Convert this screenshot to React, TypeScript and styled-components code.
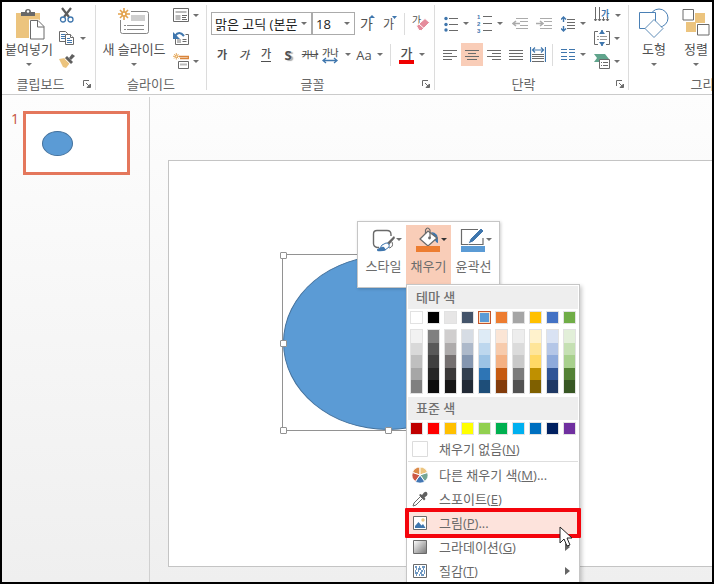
import React from "react";
import styled, { createGlobalStyle, css } from "styled-components";

const GlobalStyle = createGlobalStyle`
  *, *::before, *::after { box-sizing: border-box; }
  body {
    margin: 0;
    font-family: "Open Sans", "Noto Sans CJK KR", sans-serif;
    font-size: 13px;
    color: #5a5a5a;
  }
  button, select { font: inherit; color: inherit; }
  svg { display: block; flex: none; }
`;

const ink = "#6a6a6a";
const blue = "#3f76ad";
const sand = "#ecc47e";

/* ---------- layout ---------- */

const Window = styled.div`
  position: relative;
  display: flex;
  flex-direction: column;
  min-width: 0;
  height: 100vh;
  border: 2px solid #000;
  overflow: hidden;
  background: #fff;
`;

const Ribbon = styled.header`
  display: flex;
  flex: none;
  padding: 3px 0 4px;
  border-bottom: 1px solid #cbcbcb;
  overflow: hidden;
`;

const Group = styled.section<{ $wide?: boolean }>`
  display: flex;
  flex-direction: column;
  flex: none;
  min-width: ${(p) => (p.$wide ? "160px" : "0")};
  border-right: 1px solid #dcdcdc;
`;

const GroupBody = styled.div<{ $pad?: number }>`
  display: flex;
  height: 73px;
  padding-left: ${(p) => p.$pad ?? 0}px;
`;

const GroupFooter = styled.div`
  display: flex;
  align-items: center;
  height: 12px;
`;

const GroupName = styled.span`
  flex: 1;
  text-align: center;
  line-height: 12px;
  color: #666;
`;

const Plain = styled.button`
  display: flex;
  align-items: center;
  padding: 0;
  border: 0;
  background: transparent;
  white-space: nowrap;
`;

const Launcher = styled(Plain)`
  justify-content: center;
  width: 16px;
  height: 12px;
`;

const BigButton = styled(Plain)<{ $w: number }>`
  flex: none;
  flex-direction: column;
  width: ${(p) => p.$w}px;
  height: 66px;
  padding-top: 3px;
  line-height: 18px;
  color: #505050;
  svg:last-child { margin-top: 5px; }
`;

const SmallColumn = styled.div<{ $w: number }>`
  display: flex;
  flex-direction: column;
  gap: 3px;
  width: ${(p) => p.$w}px;
`;

const SmallButton = styled(Plain)`
  gap: 4px;
  height: 20px;
  padding-left: 3px;
`;

const Rows = styled.div`
  display: flex;
  flex-direction: column;
  gap: 8px;
  padding-top: 7px;
`;

const Row = styled.div`
  display: flex;
  align-items: center;
  height: 23px;
`;

const Tool = styled(Plain)<{ $w: number; $on?: boolean }>`
  justify-content: center;
  gap: 5px;
  width: ${(p) => p.$w}px;
  height: 23px;
  background: ${(p) => (p.$on ? "#f9cdb8" : "transparent")};
`;

const Divider = styled.span`
  width: 1px;
  height: 22px;
  margin: 0 2px 0 3px;
  background: #dcdcdc;
`;

const Combo = styled.span<{ $w: number }>`
  display: flex;
  align-items: center;
  width: ${(p) => p.$w}px;
  height: 23px;
  padding-right: 4px;
  border: 1px solid #ababab;
  select {
    flex: 1;
    min-width: 0;
    height: 21px;
    padding: 0 0 0 3px;
    border: 0;
    background: transparent;
    appearance: none;
    color: #222;
    line-height: 20px;
    overflow: hidden;
  }
`;

const Glyph = styled.span<{ $kind?: "bold" | "italic" | "under" | "shadow" | "strike" | "color"; $size?: number }>`
  font-size: ${(p) => p.$size ?? 13}px;
  line-height: 14px;
  font-weight: 500;
  color: #505050;
  ${(p) => p.$kind === "bold" && css`font-weight: 700;`}
  ${(p) => p.$kind === "italic" && css`font-style: italic;`}
  ${(p) => p.$kind === "under" && css`border-bottom: 1px solid #505050;`}
  ${(p) => p.$kind === "shadow" && css`font-weight: 700; text-shadow: 2px 1px 1px #aaa;`}
  ${(p) => p.$kind === "strike" && css`text-decoration: line-through;`}
  ${(p) => p.$kind === "color" && css`border-bottom: 4px solid #f00000; padding: 0 2px;`}
`;

const Workspace = styled.main`
  display: flex;
  flex: 1;
  min-height: 0;
  padding-top: 2px;
  background: linear-gradient(#fdfdfd, #efefef);
`;

const Thumbnails = styled.nav`
  display: flex;
  align-items: flex-start;
  flex: none;
  gap: 4px;
  width: 148px;
  padding: 14px 19px 0 9px;
  border-right: 1px solid #d0d0d0;
`;

const SlideNumber = styled.span`
  width: 8px;
  font-size: 14px;
  line-height: 16px;
  color: #c5503a;
`;

const Thumb = styled.button`
  display: block;
  flex: 1;
  height: 64px;
  padding: 14px 16px;
  border: 3px solid #e4775c;
  background: #fff;
`;

const Stage = styled.div`
  display: flex;
  flex: 1;
  min-width: 0;
  padding: 63px 0 15px 18px;
`;

const Slide = styled.div`
  position: relative;
  flex: 1;
  border: 1px solid #c4c4c4;
  border-right: 0;
  background: #fff;
`;

const Selection = styled.div`
  position: absolute;
  left: 113px;
  top: 93px;
  width: 212px;
  height: 177px;
  border: 1px solid #929292;
`;

const Ellipse = styled.div`
  height: 100%;
  border: 1px solid #44719c;
  border-radius: 50%;
  background: #5b9bd5;
`;

const ThumbEllipse = styled(Ellipse)`
  width: 31px;
  height: 25px;
`;

const Handle = styled.span<{ $x: number; $y: number }>`
  position: absolute;
  left: ${(p) => p.$x}%;
  top: ${(p) => p.$y}%;
  width: 7px;
  height: 7px;
  margin: -3px 0 0 -3px;
  border: 1px solid #929292;
  border-radius: 1px;
  background: #fff;
`;

/* ---------- floating parts ---------- */

const MiniBar = styled.div`
  position: absolute;
  left: 355px;
  top: 219px;
  display: flex;
  height: 67px;
  padding: 3px 3px 0;
  border: 1px solid #c6c6c6;
  background: #fff;
  box-shadow: 1px 1px 3px rgba(0, 0, 0, 0.2);
`;

const MiniButton = styled(Plain)<{ $on?: boolean }>`
  flex-direction: column;
  gap: 4px;
  width: 45px;
  height: 62px;
  padding-top: 2px;
  line-height: 18px;
  color: #6c6c6c;
  background: ${(p) => (p.$on ? "#f9cdb8" : "transparent")};
`;

const Menu = styled.div`
  position: absolute;
  left: 404px;
  top: 282px;
  width: 174px;
  padding: 1px;
  border: 1px solid #c6c6c6;
  background: #fff;
  box-shadow: 2px 2px 4px rgba(0, 0, 0, 0.2);
`;

const MenuHeading = styled.h2`
  height: 23px;
  margin: 0;
  padding-left: 8px;
  font-size: 13px;
  font-weight: 500;
  line-height: 22px;
  color: #707070;
  background: #eee;
`;

const SwatchRow = styled.div<{ $gap?: number }>`
  display: grid;
  grid-template-columns: repeat(10, 13px);
  justify-content: space-between;
  padding: 2px 2px ${(p) => p.$gap ?? 2}px;
`;

const TintGrid = styled(SwatchRow)`
  padding: 0 2px 3px;
`;

const TintColumn = styled.div`
  display: flex;
  flex-direction: column;
  height: 65px;
  border: 1px solid #e2e2e2;
`;

const Tint = styled.button<{ $c: string }>`
  flex: 1;
  padding: 0;
  border: 0;
  background: ${(p) => p.$c};
`;

const Swatch = styled.button<{ $c: string; $on?: boolean }>`
  height: 13px;
  padding: 0;
  border: 1px solid ${(p) => (p.$on ? "#c4562a" : "#e2e2e2")};
  background: ${(p) => p.$c};
  box-shadow: ${(p) => (p.$on ? "inset 0 0 0 1px #fbe0c8" : "none")};
`;

const Item = styled.button<{ $on?: boolean }>`
  position: relative;
  display: flex;
  align-items: center;
  gap: 11px;
  width: 100%;
  height: 24px;
  padding: 0 8px 0 4px;
  border: 0;
  text-align: left;
  line-height: 20px;
  color: #686868;
  background: ${(p) => (p.$on ? "#fde3dc" : "transparent")};
`;

const ItemText = styled.span`
  flex: 1;
  white-space: nowrap;
`;

const Rule = styled.hr`
  height: 1px;
  margin: 0 0 1px;
  border: 0;
  background: #dedede;
`;

const Callout = styled.span`
  position: absolute;
  inset: -3px;
  z-index: 1;
  border: 4px solid #f4040c;
  border-radius: 1px;
`;

const Cursor = styled.svg`
  position: absolute;
  left: 557px;
  top: 524px;
  z-index: 2;
`;

/* ---------- icons ---------- */

const Caret = () => (
  <svg width="6" height="3" viewBox="0 0 6 3"><path d="M0 0h6L3 3z" fill="#707070" /></svg>
);

const LaunchIcon = () => (
  <svg width="8" height="8" viewBox="0 0 8 8" fill="none" stroke={ink}>
    <path d="M.5 6V.5H6M3 3l4 4" /><path d="M7.500 4v3.500H4z" fill={ink} />
  </svg>
);

const PasteIcon = () => (
  <svg width="32" height="32" viewBox="-2 0 32 32">
    <path d="M1 5h24v25H1z" fill={sand} />
    <path d="M6 4h4q0-3 3-3t3 3h4v4H6z" fill="#686868" />
    <circle cx="13" cy="3.500" r="1.200" fill="#fff" />
    <path d="M14 11.500h10l6 6V32H14z" fill="#fff" />
    <path d="M15.500 12.500h7.500l6 6V31H15.500z" fill="#fff" stroke={ink} />
    <path d="M22.500 12.500v6.500H29" fill="none" stroke={ink} />
  </svg>
);

const CutIcon = () => (
  <svg width="16" height="16" viewBox="0 0 16 16" fill="none">
    <path d="M3 1l7 9M12 1L5 10" stroke="#5c5c5c" strokeWidth="2.200" />
    <circle cx="4" cy="12.500" r="2.500" stroke={blue} strokeWidth="1.300" />
    <circle cx="11.500" cy="12.500" r="2.500" stroke={blue} strokeWidth="1.300" />
  </svg>
);

const CopyIcon = () => (
  <svg width="17" height="16" viewBox="0 0 17 16" fill="#fff" stroke={ink}>
    <path d="M.5 1.500h6l2 2v8h-8z" /><path d="M2 4.500h4M2 6.500h4M2 8.500h4" stroke={blue} />
    <path d="M6.500 4.500h5l3 3v7h-8z" /><path d="M11.500 4.500v3h3" /><path d="M8 8.500h3M8 10.500h5M8 12.500h5" stroke={blue} />
  </svg>
);

const BrushIcon = () => (
  <svg width="17" height="16" viewBox="0 0 17 16">
    <path d="M0 6l6-1 5 5-4 5-3-1-1-2z" fill={sand} />
    <path d="M6 5l2-2 6 6-2 2z" fill="#5f5f5f" />
    <path d="M10 5l3-4 3 2-4 4z" fill="#5f5f5f" />
    <path d="M5.500 5.500l6 6" stroke="#fff" strokeWidth=".8" />
  </svg>
);

const Spark = () => (
  <g stroke="#e3a24d" strokeWidth="1.600"><path d="M6 0v12M0 6h12M2 2l8 8M10 2l-8 8" /><circle cx="6" cy="6" r="2" fill="#fff" /></g>
);

const NewSlideIcon = () => (
  <svg width="32" height="32" viewBox="0 0 32 32">
    <rect x="2.500" y="3.500" width="28" height="22" rx="2" fill="#fff" stroke="#858585" />
    <path d="M13 7h14v6H13z" fill="#cfcfcf" />
    <path d="M6 17.500h2M9 17.500h17M6 21.500h2M9 21.500h17" stroke="#8a8a8a" />
    <path d="M0 0h13v12H0z" fill="#fff" /><Spark />
  </svg>
);

const LayoutIcon = () => (
  <svg width="16" height="15" viewBox="0 0 16 15"><path d="M.5.500h15v13H.500z" fill="#fff" stroke={ink} /><path d="M2.500 3h11v2h-11zM2.500 7h5v5h-5z" fill="#bbb" /><path d="M9 7.500h5M9 9.500h4M9 11.500h5" stroke={ink} /></svg>
);

const ResetIcon = () => (
  <svg width="16" height="15" viewBox="0 0 16 15"><path d="M2.500 3.500h13v10h-13z" fill="#fff" stroke={ink} /><path d="M4 8h4v4H4z" fill="#bbb" /><path d="M9.500 8.500h4M9.500 10.500h4" stroke={ink} /><path d="M2 6q3-6 8-3l1 2" fill="none" stroke="#fff" strokeWidth="4" /><path d="M2 5q4-6 9 0" fill="none" stroke={blue} strokeWidth="2" /><path d="M0 1v7h7z" fill={blue} /></svg>
);

const SectionIcon = () => (
  <svg width="16" height="16" viewBox="0 0 16 16"><path d="M6 3.500h9.500v2H7" fill="none" stroke="#d9853b" strokeWidth="1.500" /><path d="M5.500 8.500h10v7h-10z" fill="#fff" stroke={ink} /><path d="M7 11.500h7" stroke="#bbb" strokeWidth="2" /><g transform="scale(.55)"><Spark /></g></svg>
);

const SizeIcon = ({ up }: { up?: boolean }) => (
  <svg width="17" height="23" viewBox="0 0 17 23"><text x="1" y="17" fontSize={up ? 14 : 12} fill="#505050">가</text><path d={up ? "M10 6h6l-3-3z" : "M10 4h5l-2.500 3z"} fill={blue} /></svg>
);

const EraserIcon = () => (
  <svg width="18" height="23" viewBox="0 0 18 23"><text x="0" y="12" fontSize="10" fill="#505050">가</text><path d="M4.500 14L13 6.500l4.500 4-8 8H7z" fill="#e58c9c" stroke="#fff" /><path d="M7 12l5 4.500" stroke="#fff" /></svg>
);

const SpacingIcon = () => (
  <svg width="18" height="20" viewBox="0 0 18 20"><text x="0" y="11" fontSize="9" fontWeight="500" fill="#505050">가나</text><path d="M2 15.500h12M4 13l-3 2.500L4 18M12 13l3 2.500-3 2.500" fill="none" stroke={blue} strokeWidth="1.300" /></svg>
);

const BulletsIcon = () => (
  <svg width="14" height="16" viewBox="0 0 14 16"><path d="M5 2.500h9M5 8.500h9M5 14.500h9" stroke={ink} /><g fill={blue}><circle cx="2" cy="2.500" r="1.700" /><circle cx="2" cy="8.500" r="1.700" /><circle cx="2" cy="14" r="1.700" /></g></svg>
);

const NumbersIcon = () => (
  <svg width="15" height="21" viewBox="0 0 15 21"><path d="M6 3.500h9M6 10.500h9M6 17.500h9" stroke={ink} /><g fill={blue} fontFamily="Liberation Sans, sans-serif" fontSize="6" fontWeight="700"><text x="0" y="6">1</text><text x="0" y="13">2</text><text x="0" y="20">3</text></g></svg>
);

const IndentIcon = ({ right }: { right?: boolean }) => (
  <svg width="16" height="11" viewBox="0 0 16 11" fill="none" stroke="#ababab"><path d="M4 .500h12M8 3.500h8M8 7.500h8M4 10.500h12" /><path d={right ? "M0 5.500h7M4 3l3 2.500L4 8" : "M1 5.500h7M4 3L1 5.500 4 8"} strokeWidth="1.600" /></svg>
);

const LineSpaceIcon = () => (
  <svg width="14" height="16" viewBox="0 0 14 16" fill="none"><path d="M6 3.500h8M6 6.500h8M6 9.500h8M6 12.500h8" stroke={ink} /><path d="M2.500 1v5M2.500 10v5M0 3.500L2.500 1 5 3.500M0 12.500L2.500 15 5 12.500" stroke={blue} strokeWidth="1.400" /></svg>
);

const alignPaths = {
  left: "M0 .500h14M0 3.500h9M0 6.500h14M0 9.500h9",
  center: "M0 .500h14M3 3.500h8M0 6.500h14M2 9.500h10",
  right: "M0 .500h14M5 3.500h9M0 6.500h14M5 9.500h9",
  justify: "M0 .500h14M0 3.500h14M0 6.500h14M0 9.500h14",
};
const AlignIcon = ({ kind }: { kind: keyof typeof alignPaths }) => (
  <svg width="14" height="10" viewBox="0 0 14 10"><path d={alignPaths[kind]} stroke={ink} /></svg>
);

const DistributeIcon = () => (
  <svg width="16" height="16" viewBox="0 0 16 16" fill="none"><path d="M.5 0v15M15.500 0v15M3 3h10M5 .500L2.500 3 5 5.500M11 .500L13.500 3 11 5.500" stroke={blue} strokeWidth="1.200" /><path d="M2 7.500h12M2 9.500h12M2 11.500h12M2 14.500h12" stroke={ink} /></svg>
);

const ColumnsIcon = () => (
  <svg width="14" height="11" viewBox="0 0 14 11"><path d="M0 .500h6M8 .500h6M0 3.500h6M8 3.500h6M0 7.500h6M8 7.500h6M0 10.500h6M8 10.500h6" stroke={blue} /></svg>
);

const DirectionIcon = () => (
  <svg width="17" height="18" viewBox="0 0 17 18" fill="none"><path d="M1.500 1v14M5.500 1v14M9.500 11v4M13.500 11v4M0 13l1.500 2L3 13M4 13l1.500 2L7 13M8 13l1.500 2 1.500-2M12 13l1.500 2 1.500-2" stroke={ink} /><text x="7" y="11" fontSize="9" fontWeight="700" fill={blue}>가</text></svg>
);

const AlignTextIcon = () => (
  <svg width="16" height="16" viewBox="0 0 16 16" fill="none"><path d="M4 1.500H.500v13H4M12 1.500h3.500v13H12" stroke={ink} /><path d="M3 6.500h2M6 6.500h7M3 9.500h2M6 9.500h7" stroke="#999" /><path d="M8 0v4M8 12v4" stroke={blue} strokeWidth="1.500" /><path d="M5 4l3-4 3 4zM5 12l3 4 3-4z" fill={blue} /></svg>
);

const SmartArtIcon = () => (
  <svg width="16" height="17" viewBox="0 0 16 17"><path d="M0 1h11l4 5-4 3H0l3-4z" fill="#60a48c" /><path d="M5.500 6.500h10v9h-10z" fill="#fff" stroke={ink} /><path d="M7 9.500h1M9 9.500h5M7 12.500h1M9 12.500h5" stroke={ink} /></svg>
);

const ShapesIcon = () => (
  <svg width="32" height="32" viewBox="0 0 32 32" fill="#fff" stroke="#4a80b5"><circle cx="21" cy="10" r="9" /><path d="M1.500 4.500h16v16h-16z" /><path d="M16 11.500l9 9-9 9-9-9z" stroke="#5f8db8" /></svg>
);

const ArrangeIcon = () => (
  <svg width="28" height="32" viewBox="0 0 28 32"><path d="M13 5h10v10H13zM4 14h10v10H4z" fill={sand} /><path d="M1 1.500h10.500V12H1zM15.500 16.500H27V27H15.500z" fill="#fff" stroke={ink} /></svg>
);

const MiniCaret = ({ dark }: { dark?: boolean }) => <path d="M30 11h6l-3 3z" fill={dark ? "#333" : "#707070"} />;

const StyleIcon = () => (
  <svg width="36" height="26" viewBox="0 0 36 26" fill="none"><path d="M13 20.500h-2q-3.500-1-3.500-4V7q0-3.500 3.500-3.500h10q4 0 4 4V9" stroke={ink} strokeWidth="1.400" /><path d="M28 9l-8 8 2 2 7-8z" fill="#666" /><path d="M20 16q4 0 3 4l-4 3h-8q4-2 5-5z" fill="#fff" stroke={blue} /><path d="M11 24q4-5 7-4l2 3q-4 2-9 1z" fill={blue} /><path d="M26 15q2 5-3 6" stroke={ink} /><MiniCaret /></svg>
);

const FillIcon = () => (
  <svg width="36" height="26" viewBox="0 0 36 26"><path d="M20 5q8 0 7 11-3 0-4-7z" fill={blue} /><path d="M9 12L17 4l9 7-9 8z" fill="#fff" stroke={ink} strokeWidth="1.300" /><path d="M14.500 7V3q2-4 4.500 0v8" fill="none" stroke={ink} strokeWidth="1.200" /><circle cx="18.500" cy="11" r="1.400" fill={ink} /><path d="M5 19h24v6H5z" fill="#ed7d31" /><MiniCaret dark /></svg>
);

const OutlineIcon = () => (
  <svg width="36" height="26" viewBox="0 0 36 26"><path d="M22 2.500H5.500v15H27V11" fill="none" stroke={ink} strokeWidth="1.200" /><path d="M12 17l2-5L25 1l3 3-11 11z" fill={blue} stroke="#fff" /><path d="M5 19h24v6H5z" fill="#5b9bd5" /><MiniCaret /></svg>
);

const NoFillIcon = () => <svg width="16" height="16" viewBox="0 0 16 16"><path d="M.5.500h15v15H.500z" fill="#fff" stroke="#dcdcdc" /></svg>;

const WheelIcon = () => (
  <svg width="16" height="16" viewBox="0 0 16 16" stroke="#fff"><path d="M8 8V0A8 8 0 0 0 .4 5.500z" fill="#db8b4a" /><path d="M8 8V0a8 8 0 0 1 7.600 5.500z" fill={sand} /><path d="M8 8l7.600-2.500A8 8 0 0 1 12.700 14.500z" fill="#74a594" /><path d="M8 8l4.700 6.500a8 8 0 0 1-9.400 0z" fill="#4377b4" /><path d="M8 8l-4.700 6.500A8 8 0 0 1 .4 5.500z" fill="#cc5846" /></svg>
);

const DropperIcon = () => (
  <svg width="16" height="16" viewBox="0 0 16 16"><path d="M8.500 5.500l2 2-6.500 6.500L1 15l1-3z" fill="#fff" stroke={ink} /><path d="M7 4l1.500-1 1.500 1 2-2.500q2-1.500 3 0t0 3l-2.500 2 1 1.500L12 9.500z" fill="#606060" /></svg>
);

const PictureIcon = () => (
  <svg width="16" height="16" viewBox="0 0 16 16"><path d="M1.500 1.500h13v13h-13z" fill="#fff" stroke={ink} /><path d="M3 13v-2l3.500-4 3 3.500L11 9l2.500 4z" fill={blue} /><circle cx="11" cy="5" r="1.700" fill={sand} /></svg>
);

const GradientIcon = () => (
  <svg width="16" height="16" viewBox="0 0 16 16"><defs><linearGradient id="fade" x1="0" y1="0" x2="1" y2="1"><stop offset="0" stopColor="#fff" /><stop offset="1" stopColor="#777" /></linearGradient></defs><path d="M1.500 1.500h13v13h-13z" fill="url(#fade)" stroke={ink} /></svg>
);

const TextureIcon = () => (
  <svg width="16" height="16" viewBox="0 0 16 16"><path d="M1.500 1.500h13v13h-13z" fill="#fff" stroke={ink} /><path d="M3 4h2M7 4h1M10 4h3M4 6h1M6 6h3M11 6h1M3 8h1M6 8h1M9 8h2M12 8h1M3 10h3M8 10h2M12 10h1M4 12h1M7 12h1M9 12h3" stroke={blue} strokeWidth="1.400" /></svg>
);

const FlyoutIcon = () => <svg width="5" height="8" viewBox="0 0 5 8"><path d="M0 0l5 4-5 4z" fill="#666" /></svg>;

/* ---------- data ---------- */

const themeColors: string[][] = [
  ["#ffffff", "#f2f2f2", "#d9d9d9", "#bfbfbf", "#a6a6a6", "#808080"],
  ["#000000", "#808080", "#595959", "#404040", "#262626", "#0d0d0d"],
  ["#e7e6e6", "#d0cece", "#aeabab", "#757070", "#3a3838", "#171616"],
  ["#44546a", "#d6dce4", "#adb9ca", "#8496b0", "#323f4f", "#222a35"],
  ["#5b9bd5", "#deebf6", "#bdd7ee", "#9cc3e5", "#2e75b5", "#1e4e79"],
  ["#ed7d31", "#fbe5d5", "#f7cbac", "#f4b183", "#c55a11", "#833c0b"],
  ["#a5a5a5", "#ededed", "#dbdbdb", "#c9c9c9", "#7b7b7b", "#525252"],
  ["#ffc000", "#fff2cc", "#fee599", "#ffd965", "#bf9000", "#7f6000"],
  ["#4472c4", "#d9e2f3", "#b4c6e7", "#8eaadb", "#2f5496", "#1f3864"],
  ["#70ad47", "#e2efd9", "#c5e0b3", "#a8d08d", "#538135", "#375623"],
];

const standardColors = ["#c00000", "#ff0000", "#ffc000", "#ffff00", "#92d050", "#00b050", "#00b0f0", "#0070c0", "#002060", "#7030a0"];

const handles = [[0, 0], [50, 0], [100, 0], [0, 50], [100, 50], [0, 100], [50, 100], [100, 100]];

const menuItems = [
  { icon: <WheelIcon />, text: "다른 채우기 색", mark: "M", tail: "..." },
  { icon: <DropperIcon />, text: "스포이트", mark: "E", tail: "" },
  { icon: <PictureIcon />, text: "그림", mark: "P", tail: "...", on: true },
  { icon: <GradientIcon />, text: "그라데이션", mark: "G", tail: "", sub: true },
  { icon: <TextureIcon />, text: "질감", mark: "T", tail: "", sub: true },
];

const Footer = ({ name, launcher }: { name: string; launcher?: boolean }) => (
  <GroupFooter>
    <GroupName>{name}</GroupName>
    {launcher && <Launcher aria-label={`${name} 설정`}><LaunchIcon /></Launcher>}
  </GroupFooter>
);

const RibbonBar = () => (
  <Ribbon>
    <Group>
      <GroupBody>
        <BigButton $w={54}><PasteIcon />붙여넣기<Caret /></BigButton>
        <SmallColumn $w={39}>
          <SmallButton aria-label="잘라내기"><CutIcon /></SmallButton>
          <SmallButton aria-label="복사"><CopyIcon /><Caret /></SmallButton>
          <SmallButton aria-label="서식 복사"><BrushIcon /></SmallButton>
        </SmallColumn>
      </GroupBody>
      <Footer name="클립보드" launcher />
    </Group>
    <Group>
      <GroupBody $pad={2}>
        <BigButton $w={72}><NewSlideIcon />새 슬라이드<Caret /></BigButton>
        <SmallColumn $w={36}>
          <SmallButton aria-label="레이아웃"><LayoutIcon /><Caret /></SmallButton>
          <SmallButton aria-label="다시 설정"><ResetIcon /></SmallButton>
          <SmallButton aria-label="구역"><SectionIcon /><Caret /></SmallButton>
        </SmallColumn>
      </GroupBody>
      <Footer name="슬라이드" />
    </Group>
    <Group>
      <GroupBody $pad={4}>
        <Rows>
          <Row>
            <Combo $w={101}><select aria-label="글꼴"><option>맑은 고딕 (본문</option></select><Caret /></Combo>
            <Combo $w={43}><select aria-label="글꼴 크기"><option>18</option></select><Caret /></Combo>
            <Tool $w={24} aria-label="글꼴 크게"><SizeIcon up /></Tool>
            <Tool $w={22} aria-label="글꼴 작게"><SizeIcon /></Tool>
            <Divider />
            <Tool $w={27} aria-label="서식 지우기"><EraserIcon /></Tool>
          </Row>
          <Row>
            <Tool $w={22} aria-label="굵게"><Glyph $size={11} $kind="bold">가</Glyph></Tool>
            <Tool $w={22} aria-label="기울임꼴"><Glyph $size={11} $kind="italic">가</Glyph></Tool>
            <Tool $w={22} aria-label="밑줄"><Glyph $size={11} $kind="under">가</Glyph></Tool>
            <Tool $w={22} aria-label="그림자"><Glyph $kind="shadow">S</Glyph></Tool>
            <Tool $w={22} aria-label="취소선"><Glyph $kind="strike" $size={9}>가나</Glyph></Tool>
            <Tool $w={31} aria-label="문자 간격"><SpacingIcon /><Caret /></Tool>
            <Tool $w={35} aria-label="대/소문자 바꾸기"><Glyph>Aa</Glyph><Caret /></Tool>
            <Divider />
            <Tool $w={38} aria-label="글꼴 색"><Glyph $kind="color">가</Glyph><Caret /></Tool>
          </Row>
        </Rows>
      </GroupBody>
      <Footer name="글꼴" launcher />
    </Group>
    <Group>
      <GroupBody $pad={4}>
        <Rows>
          <Row>
            <Tool $w={34} aria-label="글머리 기호"><BulletsIcon /><Caret /></Tool>
            <Tool $w={34} aria-label="번호 매기기"><NumbersIcon /><Caret /></Tool>
            <Tool $w={26} aria-label="목록 수준 줄임"><IndentIcon /></Tool>
            <Tool $w={22} aria-label="목록 수준 늘림"><IndentIcon right /></Tool>
            <Tool $w={36} aria-label="줄 간격"><LineSpaceIcon /><Caret /></Tool>
          </Row>
          <Row>
            <Tool $w={22} aria-label="왼쪽 맞춤"><AlignIcon kind="left" /></Tool>
            <Tool $w={22} $on aria-label="가운데 맞춤"><AlignIcon kind="center" /></Tool>
            <Tool $w={22} aria-label="오른쪽 맞춤"><AlignIcon kind="right" /></Tool>
            <Tool $w={22} aria-label="양쪽 맞춤"><AlignIcon kind="justify" /></Tool>
            <Tool $w={22} aria-label="균등 분할"><DistributeIcon /></Tool>
            <Divider />
            <Tool $w={36} aria-label="열"><ColumnsIcon /><Caret /></Tool>
          </Row>
        </Rows>
        <SmallColumn $w={37}>
          <SmallButton aria-label="텍스트 방향"><DirectionIcon /><Caret /></SmallButton>
          <SmallButton aria-label="텍스트 맞춤"><AlignTextIcon /><Caret /></SmallButton>
          <SmallButton aria-label="SmartArt로 변환"><SmartArtIcon /><Caret /></SmallButton>
        </SmallColumn>
      </GroupBody>
      <Footer name="단락" launcher />
    </Group>
    <Group $wide>
      <GroupBody>
        <BigButton $w={50}><ShapesIcon />도형<Caret /></BigButton>
        <BigButton $w={34}><ArrangeIcon />정렬<Caret /></BigButton>
      </GroupBody>
      <Footer name="그리기" />
    </Group>
  </Ribbon>
);

export default function App() {
  return (
    <Window>
      <GlobalStyle />
      <RibbonBar />
      <Workspace>
        <Thumbnails>
          <SlideNumber>1</SlideNumber>
          <Thumb aria-label="슬라이드 1"><ThumbEllipse /></Thumb>
        </Thumbnails>
        <Stage>
          <Slide>
            <Selection>
              <Ellipse />
              {handles.map(([x, y]) => <Handle key={`${x}-${y}`} $x={x} $y={y} />)}
            </Selection>
          </Slide>
        </Stage>
      </Workspace>

      <MiniBar>
        <MiniButton><StyleIcon />스타일</MiniButton>
        <MiniButton $on><FillIcon />채우기</MiniButton>
        <MiniButton><OutlineIcon />윤곽선</MiniButton>
      </MiniBar>

      <Menu>
        <MenuHeading>테마 색</MenuHeading>
        <SwatchRow $gap={5}>
          {themeColors.map(([base]) => <Swatch key={base} $c={base} $on={base === "#5b9bd5"} aria-label={base} />)}
        </SwatchRow>
        <TintGrid>
          {themeColors.map(([base, ...tints]) => (
            <TintColumn key={base}>
              {tints.map((c) => <Tint key={c} $c={c} aria-label={c} />)}
            </TintColumn>
          ))}
        </TintGrid>
        <MenuHeading>표준 색</MenuHeading>
        <SwatchRow>
          {standardColors.map((c) => <Swatch key={c} $c={c} aria-label={c} />)}
        </SwatchRow>
        <Item><NoFillIcon /><ItemText>채우기 없음(<u>N</u>)</ItemText></Item>
        <Rule />
        {menuItems.map((m) => (
          <Item key={m.mark} $on={m.on}>
            {m.icon}
            <ItemText>{m.text}(<u>{m.mark}</u>){m.tail}</ItemText>
            {m.sub && <FlyoutIcon />}
            {m.on && <Callout />}
          </Item>
        ))}
      </Menu>

      <Cursor width="13" height="21" viewBox="0 0 13 21">
        <path d="M1 1v16l4-4 3 7 3-1-3-7h5z" fill="#fff" stroke="#222" />
      </Cursor>
    </Window>
  );
}
